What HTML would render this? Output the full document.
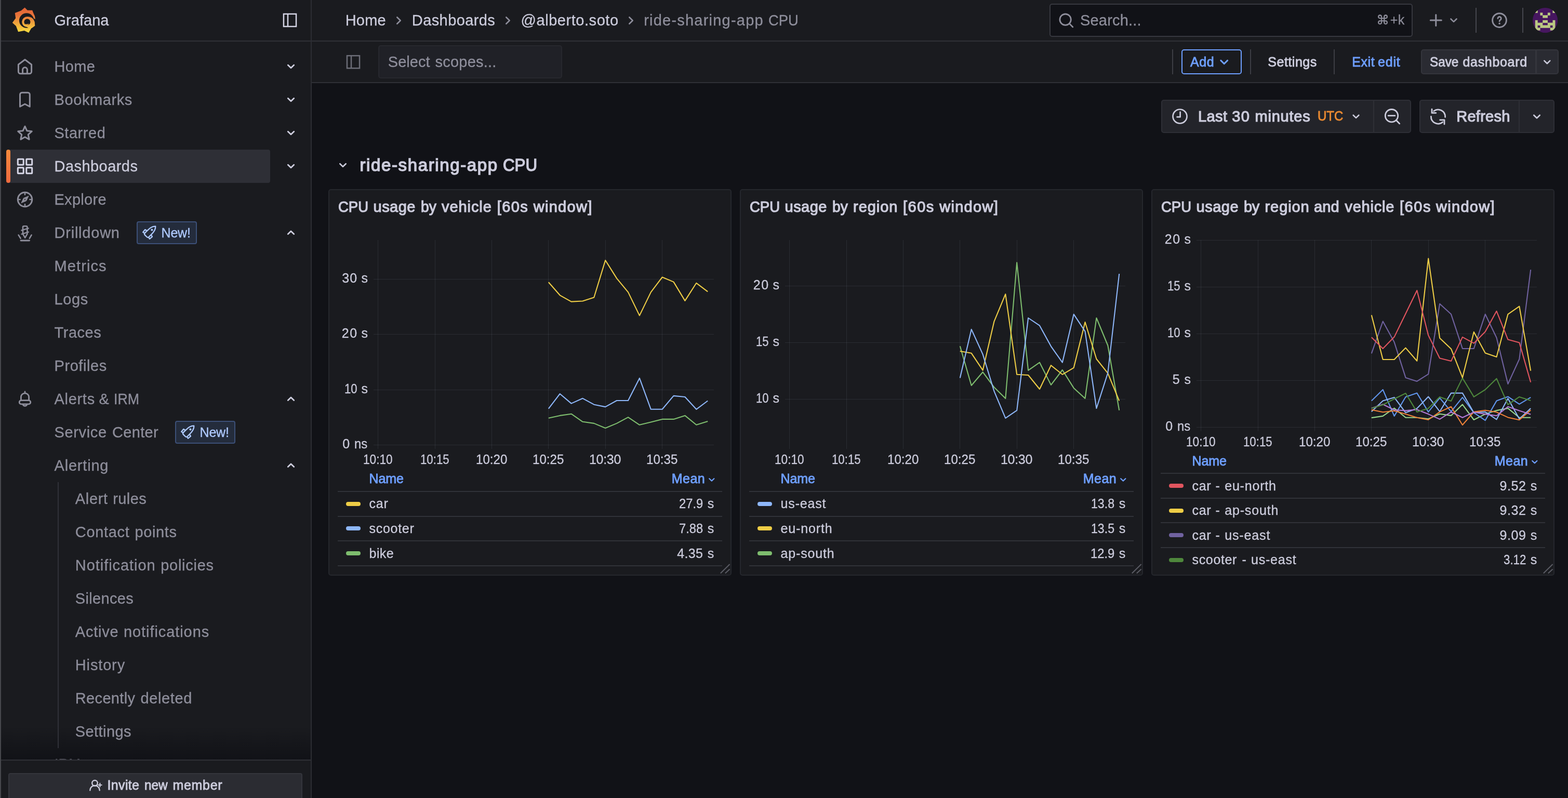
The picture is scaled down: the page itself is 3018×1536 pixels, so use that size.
<!DOCTYPE html>
<html lang="en">
<head>
<meta charset="utf-8">
<title>ride-sharing-app CPU - Dashboards - Grafana</title>
<style>
*{box-sizing:border-box;margin:0;padding:0}
html,body{width:3018px;height:1536px;overflow:hidden;background:#111217}
body{font-family:"Liberation Sans",sans-serif;color:#ccccdc;-webkit-font-smoothing:antialiased}
#app{will-change:transform;position:relative;width:3018px;height:1536px;overflow:hidden;background:#111217}
.t{position:absolute;white-space:nowrap;display:block}
.abs{position:absolute}
svg{position:absolute;overflow:visible}
ul{list-style:none}
a{color:inherit;text-decoration:none}
button{font:inherit;color:inherit;background:none;border:0}
#sidebar{position:absolute;left:0;top:0;width:600px;height:1536px;background:#1a1b1f;border-right:2px solid #2c2d33;border-left:2px solid #46474c;overflow:hidden}
#sidebar-head{position:absolute;left:0;top:0;width:598px;height:80px;border-bottom:2px solid #2f3036}
#topbar{position:absolute;left:600px;top:0;width:2418px;height:80px;background:#1a1b1f;border-bottom:2px solid #2f3036}
#toolbar{position:absolute;left:600px;top:80px;width:2418px;height:80px;background:#1a1b1f;border-bottom:2px solid #2f3036}
#main{position:absolute;left:600px;top:160px;width:2418px;height:1376px;background:#111217}
.navactive{position:absolute;left:12px;top:288px;width:508px;height:64px;background:#2e2f36;border-radius:4px}
.navactive:before{content:"";position:absolute;left:0;top:0;width:8px;height:64px;border-radius:4px;background:linear-gradient(180deg,#f58a3c 0%,#ee6a3f 100%)}
.badge{position:absolute;height:44px;border:2px solid #3c5078;background:#242c3c;border-radius:4px}
.vline{position:absolute;background:#303138;width:2px}
.panel{position:absolute;background:#1a1b1f;border:2px solid #25272d;border-radius:5px;overflow:hidden}
.hr{position:absolute;height:2px;background:#303238}
.sw{position:absolute;width:28px;height:8px;border-radius:4px}
.btn{position:absolute;border-radius:4px}
.tw{display:block;font-weight:400;font-size:16px;line-height:0}

</style>
</head>
<body>
<div id="app">
<nav id="sidebar" aria-label="Navigation">
<div class="abs" style="left:-2px;top:0;width:600px;height:1536px">
<div id="sidebar-head" style="left:2px"></div>
<svg style="left:0;top:0" width="80" height="80" viewBox="0 0 80 80"><defs><linearGradient id="glg" gradientUnits="userSpaceOnUse" x1="0" y1="15" x2="0" y2="63"><stop offset="0" stop-color="#e26337"/><stop offset="0.3" stop-color="#e8733a"/><stop offset="1" stop-color="#f7de3f"/></linearGradient></defs><polygon points="47.7,14.6 52.8,19.7 62.2,19.8 64.4,25.5 67,31 67.9,37.7 66.6,43 67.4,49.5 60.2,54.4 55.2,63 46.8,58.9 35.1,61.2 30.8,50 23.8,43.8 30.2,35 28.7,24.9 40.6,20.6" fill="url(#glg)"/><circle cx="51.2" cy="39.5" r="14.3" fill="#1a1b1f"/><path d="M64.6 35.2 L70 37.9 L70 42.4 L65.2 41.2 Z" fill="#1a1b1f"/><path d="M52.3 32.1 A10.1 10.1 0 1 0 52.3 52.3 L57 55.5 L62 53.5 L67 49.6 L66.4 42.6 C66 39 63 32.1 52.3 32.1 Z" fill="url(#glg)"/><circle cx="52.4" cy="42.2" r="6.05" fill="#1a1b1f"/><path d="M49.6 46.9 Q52 48.3 54.4 46.4" fill="none" stroke="#f2a63c" stroke-width="1.5" stroke-linecap="round"/></svg>
<span class="t" style="left:104.5px;top:21.1px;font-size:29px;line-height:36px;color:#ccccdc;letter-spacing:0.03px;-webkit-text-stroke:0.3px currentColor;">Grafana</span>
<svg style="left:0;top:0" width="1" height="1"><rect x="545.95" y="26.90" width="24.10" height="24.10" fill="none" stroke="#d4d4e4" stroke-width="2.5"/><path d="M554.00 26.90 V51.00" fill="none" stroke="#d4d4e4" stroke-width="2.5"/></svg>
<div class="abs" style="left:2px;top:1398px;width:596px;height:64px;background:linear-gradient(180deg,rgba(17,18,23,0) 0%,rgba(17,18,23,1) 100%)"></div>
<div class="navactive"></div>
<div class="vline" style="left:111px;top:928px;height:512px"></div>
<ul>
<li>
<svg style="left:32px;top:112px" width="32" height="32" viewBox="0 0 32 32" ><path d="M3.4 12.3 L16 2.7 L28.6 12.3 V25.8 a4 4 0 0 1 -4 4 H7.4 a4 4 0 0 1 -4 -4 Z" fill="none" stroke="#8e8e9b" stroke-width="3" stroke-linecap="round" stroke-linejoin="round" /><path d="M11.6 29.6 V22.1 a4.4 4.4 0 0 1 8.8 0 V29.6" fill="none" stroke="#8e8e9b" stroke-width="3" stroke-linecap="round" stroke-linejoin="round" /></svg>
<a class="t" style="left:104.5px;top:110.1px;font-size:29px;line-height:36px;color:#8e8e9b;letter-spacing:0.32px;-webkit-text-stroke:0.3px currentColor;">Home</a>
<svg style="left:0;top:0" width="1" height="1"><path d="M554.30 125.20 L560.00 130.80 L565.70 125.20" fill="none" stroke="#cfcfdf" stroke-width="2.8" stroke-linecap="round" stroke-linejoin="round"/></svg>
</li>
<li>
<svg style="left:32px;top:176px" width="32" height="32" viewBox="0 0 32 32" ><path d="M6.5 29.3 V6 a3.7 3.7 0 0 1 3.7 -3.7 H21.6 a3.7 3.7 0 0 1 3.7 3.7 V29.3 L15.9 24.2 Z" fill="none" stroke="#8e8e9b" stroke-width="3" stroke-linecap="round" stroke-linejoin="round" /></svg>
<a class="t" style="left:104.5px;top:174.1px;font-size:29px;line-height:36px;color:#8e8e9b;letter-spacing:0.6px;-webkit-text-stroke:0.3px currentColor;">Bookmarks</a>
<svg style="left:0;top:0" width="1" height="1"><path d="M554.30 189.20 L560.00 194.80 L565.70 189.20" fill="none" stroke="#cfcfdf" stroke-width="2.8" stroke-linecap="round" stroke-linejoin="round"/></svg>
</li>
<li>
<svg style="left:32px;top:240px" width="32" height="32" viewBox="0 0 32 32" ><polygon points="16.00,3.20 19.88,11.76 29.22,12.80 22.28,19.14 24.17,28.35 16.00,23.70 7.83,28.35 9.72,19.14 2.78,12.80 12.12,11.76" fill="none" stroke="#8e8e9b" stroke-width="3" stroke-linecap="round" stroke-linejoin="round" /></svg>
<a class="t" style="left:104.5px;top:238.1px;font-size:29px;line-height:36px;color:#8e8e9b;letter-spacing:0.53px;-webkit-text-stroke:0.3px currentColor;">Starred</a>
<svg style="left:0;top:0" width="1" height="1"><path d="M554.30 253.20 L560.00 258.80 L565.70 253.20" fill="none" stroke="#cfcfdf" stroke-width="2.8" stroke-linecap="round" stroke-linejoin="round"/></svg>
</li>
<li>
<svg style="left:32px;top:304px" width="32" height="32" viewBox="0 0 32 32" ><rect x="2.3" y="2.3" width="10.9" height="10.9" rx="0.8" fill="none" stroke="#d6d6e6" stroke-width="3" stroke-linecap="round" stroke-linejoin="round" /><rect x="2.3" y="18.8" width="10.9" height="10.9" rx="0.8" fill="none" stroke="#d6d6e6" stroke-width="3" stroke-linecap="round" stroke-linejoin="round" /><rect x="18.8" y="2.3" width="10.9" height="10.9" rx="0.8" fill="none" stroke="#d6d6e6" stroke-width="3" stroke-linecap="round" stroke-linejoin="round" /><rect x="18.8" y="18.8" width="10.9" height="10.9" rx="0.8" fill="none" stroke="#d6d6e6" stroke-width="3" stroke-linecap="round" stroke-linejoin="round" /></svg>
<a class="t" style="left:104.5px;top:302.1px;font-size:29px;line-height:36px;color:#ccccdc;letter-spacing:0.45px;-webkit-text-stroke:0.3px currentColor;">Dashboards</a>
<svg style="left:0;top:0" width="1" height="1"><path d="M554.30 317.20 L560.00 322.80 L565.70 317.20" fill="none" stroke="#cfcfdf" stroke-width="2.8" stroke-linecap="round" stroke-linejoin="round"/></svg>
</li>
<li>
<svg style="left:32px;top:368px" width="32" height="32" viewBox="0 0 32 32" ><circle cx="16" cy="16" r="13.7" fill="none" stroke="#8e8e9b" stroke-width="3" stroke-linecap="round" stroke-linejoin="round" /><path d="M16 4.5V6.6 M16 25.4V27.5 M4.5 16H6.6 M25.4 16H27.5" fill="none" stroke="#8e8e9b" stroke-width="2.6" stroke-linecap="round" stroke-linejoin="round" /><path d="M23.2 9.2 L18.6 18.8 L8.8 22.8 L13.4 13.2 Z M16 14.6 a1.4 1.4 0 1 0 0.01 0 Z" fill="#8e8e9b" fill-rule="evenodd" stroke="#8e8e9b" stroke-width="0.8" stroke-linejoin="round"/></svg>
<a class="t" style="left:104.5px;top:366.1px;font-size:29px;line-height:36px;color:#8e8e9b;letter-spacing:0.28px;-webkit-text-stroke:0.3px currentColor;">Explore</a>
</li>
<li>
<svg style="left:32px;top:432px" width="32" height="32" viewBox="0 0 32 32" ><path d="M12 5.2 a2 2 0 0 1 2 -2 h4.4 a2 2 0 0 1 2 2 V18.4 L16.2 25.6 L12 18.4 Z" fill="none" stroke="#8e8e9b" stroke-width="2.6" stroke-linecap="round" stroke-linejoin="round" /><path d="M9.4 11.4 L22.8 7.4 M9.6 18.6 L22.8 14.6" fill="none" stroke="#8e8e9b" stroke-width="2.4" stroke-linecap="round" stroke-linejoin="round" /><path d="M3.6 20.4 L7.6 26.8 M28.6 20.4 L24.8 26.8" fill="none" stroke="#8e8e9b" stroke-width="2.6" stroke-linecap="round" stroke-linejoin="round" /><path d="M8 31 H24.6" fill="none" stroke="#8e8e9b" stroke-width="2.8" stroke-linecap="round" stroke-linejoin="round" /></svg>
<a class="t" style="left:104.5px;top:430.1px;font-size:29px;line-height:36px;color:#8e8e9b;letter-spacing:0.78px;-webkit-text-stroke:0.3px currentColor;">Drilldown</a>
<span class="badge" style="left:263px;top:426px;width:116px"></span>
<svg style="left:267px;top:428px" width="40" height="40" viewBox="0 0 40 40" ><g transform="translate(20 20) rotate(45)"><path d="M0 -17.4 C4.6 -13.4 5.7 -8 5.4 0 V6 Q5.4 8.8 2.6 8.8 H-2.6 Q-5.4 8.8 -5.4 6 V0 C-5.7 -8 -4.6 -13.4 0 -17.4 Z" fill="none" stroke="#afcaff" stroke-width="2.3" stroke-linecap="round" stroke-linejoin="round" /><path d="M-5.6 0.2 L-9.7 1.2 L-9 7.7 L-5.6 6.8 M5.6 0.2 L9.7 1.2 L9 7.7 L5.6 6.8" fill="none" stroke="#afcaff" stroke-width="2.3" stroke-linecap="round" stroke-linejoin="round" /><rect x="-1.8" y="-9.5" width="3.6" height="3.6" fill="#afcaff"/></g></svg>
<span class="t" style="left:310.5px;top:432.6px;font-size:25px;line-height:31px;color:#afcaff;letter-spacing:-0.17px;-webkit-text-stroke:0.3px currentColor;">New!</span>
<svg style="left:0;top:0" width="1" height="1"><path d="M554.30 450.60 L560.00 445.00 L565.70 450.60" fill="none" stroke="#cfcfdf" stroke-width="2.8" stroke-linecap="round" stroke-linejoin="round"/></svg>
</li>
<li>
<a class="t" style="left:104.5px;top:494.1px;font-size:29px;line-height:36px;color:#8e8e9b;letter-spacing:1.1px;-webkit-text-stroke:0.3px currentColor;">Metrics</a>
</li>
<li>
<a class="t" style="left:104.5px;top:558.1px;font-size:29px;line-height:36px;color:#8e8e9b;letter-spacing:0.59px;-webkit-text-stroke:0.3px currentColor;">Logs</a>
</li>
<li>
<a class="t" style="left:104.5px;top:622.1px;font-size:29px;line-height:36px;color:#8e8e9b;letter-spacing:0.54px;-webkit-text-stroke:0.3px currentColor;">Traces</a>
</li>
<li>
<a class="t" style="left:104.5px;top:686.1px;font-size:29px;line-height:36px;color:#8e8e9b;letter-spacing:0.57px;-webkit-text-stroke:0.3px currentColor;">Profiles</a>
</li>
<li>
<svg style="left:32px;top:752px" width="32" height="32" viewBox="0 0 32 32" ><path d="M16 1.8 V4.2" fill="none" stroke="#8e8e9b" stroke-width="2.8" stroke-linecap="round" stroke-linejoin="round" /><path d="M8.4 18.6 V12.4 a7.6 7.6 0 0 1 15.2 0 V18.6" fill="none" stroke="#8e8e9b" stroke-width="2.8" stroke-linecap="round" stroke-linejoin="round" /><rect x="5.2" y="18.6" width="21.6" height="7.3" rx="3.6" fill="none" stroke="#8e8e9b" stroke-width="2.8" stroke-linecap="round" stroke-linejoin="round" /><path d="M12.2 26.6 a4 4 0 0 0 7.6 0" fill="none" stroke="#8e8e9b" stroke-width="2.8" stroke-linecap="round" stroke-linejoin="round" /></svg>
<a class="tw"><span class="t" style="left:104.5px;top:750.1px;font-size:29px;line-height:36px;color:#8e8e9b;letter-spacing:0.7px;-webkit-text-stroke:0.3px currentColor;">Alerts</span> <span class="t" style="left:190.4px;top:750.1px;font-size:29px;line-height:36px;color:#8e8e9b;-webkit-text-stroke:0.3px currentColor;">&amp;</span> <span class="t" style="left:218.9px;top:750.1px;font-size:29px;line-height:36px;color:#8e8e9b;transform:scaleX(0.9264);transform-origin:0 0;-webkit-text-stroke:0.3px currentColor;">IRM</span></a>
<svg style="left:0;top:0" width="1" height="1"><path d="M554.30 770.60 L560.00 765.00 L565.70 770.60" fill="none" stroke="#cfcfdf" stroke-width="2.8" stroke-linecap="round" stroke-linejoin="round"/></svg>
</li>
<li>
<a class="tw"><span class="t" style="left:104.5px;top:814.1px;font-size:29px;line-height:36px;color:#8e8e9b;letter-spacing:0.66px;-webkit-text-stroke:0.3px currentColor;">Service</span> <span class="t" style="left:215.9px;top:814.1px;font-size:29px;line-height:36px;color:#8e8e9b;letter-spacing:0.36px;-webkit-text-stroke:0.3px currentColor;">Center</span></a>
<span class="badge" style="left:337px;top:810px;width:116px"></span>
<svg style="left:341px;top:812px" width="40" height="40" viewBox="0 0 40 40" ><g transform="translate(20 20) rotate(45)"><path d="M0 -17.4 C4.6 -13.4 5.7 -8 5.4 0 V6 Q5.4 8.8 2.6 8.8 H-2.6 Q-5.4 8.8 -5.4 6 V0 C-5.7 -8 -4.6 -13.4 0 -17.4 Z" fill="none" stroke="#afcaff" stroke-width="2.3" stroke-linecap="round" stroke-linejoin="round" /><path d="M-5.6 0.2 L-9.7 1.2 L-9 7.7 L-5.6 6.8 M5.6 0.2 L9.7 1.2 L9 7.7 L5.6 6.8" fill="none" stroke="#afcaff" stroke-width="2.3" stroke-linecap="round" stroke-linejoin="round" /><rect x="-1.8" y="-9.5" width="3.6" height="3.6" fill="#afcaff"/></g></svg>
<span class="t" style="left:384.5px;top:816.6px;font-size:25px;line-height:31px;color:#afcaff;letter-spacing:-0.17px;-webkit-text-stroke:0.3px currentColor;">New!</span>
</li>
<li>
<a class="t" style="left:104.5px;top:878.1px;font-size:29px;line-height:36px;color:#8e8e9b;letter-spacing:0.81px;-webkit-text-stroke:0.3px currentColor;">Alerting</a>
<svg style="left:0;top:0" width="1" height="1"><path d="M554.30 898.60 L560.00 893.00 L565.70 898.60" fill="none" stroke="#cfcfdf" stroke-width="2.8" stroke-linecap="round" stroke-linejoin="round"/></svg>
</li>
<li>
<a class="tw"><span class="t" style="left:144.8px;top:942.1px;font-size:29px;line-height:36px;color:#8e8e9b;letter-spacing:0.65px;-webkit-text-stroke:0.3px currentColor;">Alert</span> <span class="t" style="left:217.2px;top:942.1px;font-size:29px;line-height:36px;color:#8e8e9b;letter-spacing:0.42px;-webkit-text-stroke:0.3px currentColor;">rules</span></a>
</li>
<li>
<a class="tw"><span class="t" style="left:144.8px;top:1006.1px;font-size:29px;line-height:36px;color:#8e8e9b;letter-spacing:0.68px;-webkit-text-stroke:0.3px currentColor;">Contact</span> <span class="t" style="left:259.5px;top:1006.1px;font-size:29px;line-height:36px;color:#8e8e9b;letter-spacing:0.61px;-webkit-text-stroke:0.3px currentColor;">points</span></a>
</li>
<li>
<a class="tw"><span class="t" style="left:144.8px;top:1070.1px;font-size:29px;line-height:36px;color:#8e8e9b;letter-spacing:0.94px;-webkit-text-stroke:0.3px currentColor;">Notification</span> <span class="t" style="left:309.2px;top:1070.1px;font-size:29px;line-height:36px;color:#8e8e9b;letter-spacing:0.73px;-webkit-text-stroke:0.3px currentColor;">policies</span></a>
</li>
<li>
<a class="t" style="left:144.8px;top:1134.1px;font-size:29px;line-height:36px;color:#8e8e9b;letter-spacing:0.34px;-webkit-text-stroke:0.3px currentColor;">Silences</a>
</li>
<li>
<a class="tw"><span class="t" style="left:144.8px;top:1198.1px;font-size:29px;line-height:36px;color:#8e8e9b;letter-spacing:0.75px;-webkit-text-stroke:0.3px currentColor;">Active</span> <span class="t" style="left:238.0px;top:1198.1px;font-size:29px;line-height:36px;color:#8e8e9b;letter-spacing:0.92px;-webkit-text-stroke:0.3px currentColor;">notifications</span></a>
</li>
<li>
<a class="t" style="left:144.8px;top:1262.1px;font-size:29px;line-height:36px;color:#8e8e9b;letter-spacing:0.85px;-webkit-text-stroke:0.3px currentColor;">History</a>
</li>
<li>
<a class="tw"><span class="t" style="left:144.8px;top:1326.1px;font-size:29px;line-height:36px;color:#8e8e9b;letter-spacing:0.34px;-webkit-text-stroke:0.3px currentColor;">Recently</span> <span class="t" style="left:270.6px;top:1326.1px;font-size:29px;line-height:36px;color:#8e8e9b;letter-spacing:0.61px;-webkit-text-stroke:0.3px currentColor;">deleted</span></a>
</li>
<li>
<a class="t" style="left:144.8px;top:1390.1px;font-size:29px;line-height:36px;color:#8e8e9b;letter-spacing:0.41px;-webkit-text-stroke:0.3px currentColor;">Settings</a>
</li>
<li>
<a class="t" style="left:104.5px;top:1453.3px;font-size:29px;line-height:36px;color:#5e5e69;transform:scaleX(0.9396);transform-origin:0 0;-webkit-text-stroke:0.3px currentColor;">IRM</a>
<svg style="left:0;top:0" width="1" height="1"><path d="M554.30 1473.80 L560.00 1468.20 L565.70 1473.80" fill="none" stroke="#cfcfdf" stroke-width="2.8" stroke-linecap="round" stroke-linejoin="round"/></svg>
</li>
</ul>
<div class="abs" style="left:2px;top:1462px;width:596px;height:74px;background:#1a1b1f;border-top:2px solid #2f3036"></div>
<button class="btn" style="left:16px;top:1488px;width:566px;height:64px;background:#2b2c32;border:2px solid #34353c"></button>
<svg style="left:0;top:0" width="1" height="1"><circle cx="182.5" cy="1507.3" r="5.3" fill="none" stroke="#ccccdc" stroke-width="2.4" stroke-linecap="round" stroke-linejoin="round" /><path d="M173.29999999999998 1521.1999999999998 a9.2 9.2 0 0 1 18.4 0" fill="none" stroke="#ccccdc" stroke-width="2.4" stroke-linecap="round" stroke-linejoin="round" /><path d="M189.2 1511.0 H195.6 M192.4 1507.8 V1514.1999999999998" fill="none" stroke="#ccccdc" stroke-width="2.2" stroke-linecap="round" stroke-linejoin="round" /></svg>
<span class="tw"><span class="t" style="left:206.5px;top:1496.3px;font-size:25px;line-height:31px;color:#ccccdc;letter-spacing:0.35px;-webkit-text-stroke:0.85px currentColor;">Invite</span> <span class="t" style="left:278.0px;top:1496.3px;font-size:25px;line-height:31px;color:#ccccdc;transform:scaleX(0.9744);transform-origin:0 0;-webkit-text-stroke:0.85px currentColor;">new</span> <span class="t" style="left:332.6px;top:1496.3px;font-size:25px;line-height:31px;color:#ccccdc;letter-spacing:0.65px;-webkit-text-stroke:0.85px currentColor;">member</span></span>
</div>
</nav>
<header id="topbar">
<div class="abs" style="left:-600px;top:0;width:3018px;height:80px">
<nav aria-label="Breadcrumbs">
<a class="t" style="left:664.7px;top:21.1px;font-size:29px;line-height:36px;color:#ccccdc;letter-spacing:0.19px;-webkit-text-stroke:0.3px currentColor;">Home</a>
<svg style="left:0;top:0" width="1" height="1"><path d="M764.30 33.20 L770.70 39.50 L764.30 45.80" fill="none" stroke="#8e8e9b" stroke-width="2.6" stroke-linecap="round" stroke-linejoin="round"/></svg>
<a class="t" style="left:792.8px;top:21.1px;font-size:29px;line-height:36px;color:#ccccdc;letter-spacing:0.41px;-webkit-text-stroke:0.3px currentColor;">Dashboards</a>
<svg style="left:0;top:0" width="1" height="1"><path d="M974.30 33.20 L980.70 39.50 L974.30 45.80" fill="none" stroke="#8e8e9b" stroke-width="2.6" stroke-linecap="round" stroke-linejoin="round"/></svg>
<a class="t" style="left:1002.5px;top:21.1px;font-size:29px;line-height:36px;color:#ccccdc;letter-spacing:0.55px;-webkit-text-stroke:0.3px currentColor;">@alberto.soto</a>
<svg style="left:0;top:0" width="1" height="1"><path d="M1211.30 33.20 L1217.70 39.50 L1211.30 45.80" fill="none" stroke="#8e8e9b" stroke-width="2.6" stroke-linecap="round" stroke-linejoin="round"/></svg>
<span class="tw"><span class="t" style="left:1239.2px;top:21.1px;font-size:29px;line-height:36px;color:#8e8e9b;letter-spacing:1.22px;-webkit-text-stroke:0.3px currentColor;">ride-sharing-app</span> <span class="t" style="left:1478.5px;top:21.1px;font-size:29px;line-height:36px;color:#8e8e9b;transform:scaleX(0.9430);transform-origin:0 0;-webkit-text-stroke:0.3px currentColor;">CPU</span></span>
</nav>
<div class="abs" style="left:2020px;top:7px;width:699px;height:64px;background:#111217;border:2px solid #37383f;border-radius:5px"></div>
<svg style="left:0;top:0" width="1" height="1"><circle cx="2050.60" cy="37.70" r="10.7" fill="none" stroke="#8e8e9b" stroke-width="2.8" stroke-linecap="round" stroke-linejoin="round" /><path d="M2058.52 45.62 L2064.80 51.90" fill="none" stroke="#8e8e9b" stroke-width="2.8" stroke-linecap="round" stroke-linejoin="round" /></svg>
<span class="t" style="left:2079.0px;top:21.1px;font-size:29px;line-height:36px;color:#8e8e9b;letter-spacing:0.18px;-webkit-text-stroke:0.3px currentColor;">Search...</span>
<span class="t" style="left:2649.3px;top:23.5px;font-size:24.5px;line-height:30px;color:#8e8e9b;font-family:'DejaVu Sans',sans-serif;-webkit-text-stroke:0.5px currentColor">⌘</span>
<span class="t" style="left:2675.8px;top:22.8px;font-size:25px;line-height:31px;color:#8e8e9b;-webkit-text-stroke:0.3px currentColor;">+</span>
<span class="t" style="left:2690.8px;top:22.8px;font-size:25px;line-height:31px;color:#8e8e9b;-webkit-text-stroke:0.3px currentColor;">k</span>
<svg style="left:0;top:0" width="1" height="1"><path d="M2753.3 39 H2774.3 M2763.8 28.5 V49.5" fill="none" stroke="#8e8e9b" stroke-width="3" stroke-linecap="round" stroke-linejoin="round" /></svg>
<svg style="left:0;top:0" width="1" height="1"><path d="M2792.50 36.50 L2798.00 41.90 L2803.50 36.50" fill="none" stroke="#8e8e9b" stroke-width="2.6" stroke-linecap="round" stroke-linejoin="round"/></svg>
<div class="abs" style="left:2840px;top:15px;width:2px;height:48px;background:#45464d"></div>
<svg style="left:0;top:0" width="1" height="1"><circle cx="2886" cy="39.1" r="13.4" fill="none" stroke="#8e8e9b" stroke-width="2.9" stroke-linecap="round" stroke-linejoin="round" /><path d="M2882.9 35.5 a3.2 3.2 0 1 1 4.9 2.7 c-1.2 0.8 -1.7 1.4 -1.7 2.7" fill="none" stroke="#8e8e9b" stroke-width="2.8" stroke-linecap="round" stroke-linejoin="round" /><circle cx="2886.1" cy="45.2" r="1.75" fill="#8e8e9b"/></svg>
<div class="abs" style="left:2930px;top:15px;width:2px;height:48px;background:#45464d"></div>
<svg style="left:2950px;top:14.9px" width="48.2" height="48.2" viewBox="0 0 48.2 48.2" ><defs><clipPath id="avc"><circle cx="24.1" cy="24.1" r="24.1"/></clipPath></defs><g clip-path="url(#avc)"><rect width="48.2" height="48.2" fill="#46165f"/><rect x="4.77" y="4.57" width="4.92" height="5.32" fill="#bac882"/><rect x="38.51" y="4.57" width="4.92" height="5.32" fill="#bac882"/><rect x="14.41" y="9.39" width="4.92" height="5.32" fill="#bac882"/><rect x="28.87" y="9.39" width="4.92" height="5.32" fill="#bac882"/><rect x="19.23" y="14.21" width="9.74" height="5.32" fill="#bac882"/><rect x="4.77" y="23.85" width="4.92" height="5.32" fill="#bac882"/><rect x="19.23" y="23.85" width="9.74" height="5.32" fill="#bac882"/><rect x="38.51" y="23.85" width="4.92" height="5.32" fill="#bac882"/><rect x="4.77" y="28.67" width="14.56" height="5.32" fill="#bac882"/><rect x="28.87" y="28.67" width="14.56" height="5.32" fill="#bac882"/><rect x="4.77" y="33.49" width="4.92" height="5.32" fill="#bac882"/><rect x="14.41" y="33.49" width="19.38" height="5.32" fill="#bac882"/><rect x="38.51" y="33.49" width="4.92" height="5.32" fill="#bac882"/><rect x="4.77" y="38.31" width="9.74" height="5.32" fill="#bac882"/><rect x="33.69" y="38.31" width="9.74" height="5.32" fill="#bac882"/></g></svg>
</div>
</header>
<div id="toolbar" role="toolbar">
<div class="abs" style="left:-600px;top:-80px;width:3018px;height:160px">
<svg style="left:0;top:0" width="1" height="1"><rect x="667.95" y="107.20" width="24.10" height="24.10" fill="none" stroke="#6c6d77" stroke-width="2.5"/><path d="M676.00 107.20 V131.30" fill="none" stroke="#6c6d77" stroke-width="2.5"/></svg>
<div class="abs" style="left:728px;top:87px;width:354px;height:64px;background:#202127;border:2px solid #27282e;border-radius:5px"></div>
<span class="tw"><span class="t" style="left:746.8px;top:101.1px;font-size:29px;line-height:36px;color:#8e8e9b;letter-spacing:0.04px;-webkit-text-stroke:0.3px currentColor;">Select</span> <span class="t" style="left:837.6px;top:101.1px;font-size:29px;line-height:36px;color:#8e8e9b;letter-spacing:0.2px;-webkit-text-stroke:0.3px currentColor;">scopes...</span></span>
<div class="abs" style="left:2256px;top:95px;width:2px;height:48px;background:#3c3d44"></div>
<div class="abs" style="left:2406px;top:95px;width:2px;height:48px;background:#3c3d44"></div>
<div class="abs" style="left:2567px;top:95px;width:2px;height:48px;background:#3c3d44"></div>
<button class="btn" style="left:2274px;top:95px;width:116px;height:48px;border:2px solid #6e9fff;border-radius:5px"></button>
<span class="t" style="left:2291.0px;top:103.5px;font-size:25px;line-height:31px;color:#6e9fff;letter-spacing:0.6px;-webkit-text-stroke:0.85px currentColor;">Add</span>
<svg style="left:0;top:0" width="1" height="1"><path d="M2349.80 116.40 L2356.20 122.80 L2362.60 116.40" fill="none" stroke="#6e9fff" stroke-width="3" stroke-linecap="round" stroke-linejoin="round"/></svg>
<span class="t" style="left:2440.3px;top:103.5px;font-size:25px;line-height:31px;color:#ccccdc;letter-spacing:0.52px;-webkit-text-stroke:0.85px currentColor;">Settings</span>
<span class="tw"><span class="t" style="left:2602.2px;top:103.5px;font-size:25px;line-height:31px;color:#6e9fff;letter-spacing:0.62px;-webkit-text-stroke:0.85px currentColor;">Exit</span> <span class="t" style="left:2651.9px;top:103.5px;font-size:25px;line-height:31px;color:#6e9fff;letter-spacing:0.85px;-webkit-text-stroke:0.85px currentColor;">edit</span></span>
<button class="btn" style="left:2735px;top:95px;width:222px;height:48px;background:#2a2b32;border:2px solid #34353c;border-radius:5px 0 0 5px"></button>
<button class="btn" style="left:2956px;top:95px;width:44px;height:48px;background:#2a2b32;border:2px solid #34353c;border-radius:0 5px 5px 0"></button>
<span class="tw"><span class="t" style="left:2751.9px;top:103.5px;font-size:25px;line-height:31px;color:#ccccdc;transform:scaleX(0.9719);transform-origin:0 0;-webkit-text-stroke:0.85px currentColor;">Save</span> <span class="t" style="left:2815.5px;top:103.5px;font-size:25px;line-height:31px;color:#ccccdc;letter-spacing:0.68px;-webkit-text-stroke:0.85px currentColor;">dashboard</span></span>
<svg style="left:0;top:0" width="1" height="1"><path d="M2972.30 116.90 L2977.80 122.30 L2983.30 116.90" fill="none" stroke="#ccccdc" stroke-width="2.6" stroke-linecap="round" stroke-linejoin="round"/></svg>
</div>
</div>
<main id="main">
<div class="abs" style="left:-600px;top:-160px;width:3018px;height:1536px">
<button class="btn" style="left:2235px;top:192px;width:410px;height:64px;background:#23242a;border:2px solid #2e2f36;border-radius:5px 0 0 5px"></button>
<button class="btn" style="left:2643px;top:192px;width:73px;height:64px;background:#23242a;border:2px solid #2e2f36;border-radius:0 5px 5px 0"></button>
<svg style="left:0;top:0" width="1" height="1"><circle cx="2271" cy="224" r="13.5" fill="none" stroke="#ccccdc" stroke-width="2.7" stroke-linecap="round" stroke-linejoin="round" /><path d="M2271.6 215.6 V225.2 H2265.6" fill="none" stroke="#ccccdc" stroke-width="2.7" stroke-linecap="round" stroke-linejoin="round" /></svg>
<span class="tw"><span class="t" style="left:2306.1px;top:205.9px;font-size:29px;line-height:36px;color:#ccccdc;letter-spacing:0.36px;-webkit-text-stroke:1.20px currentColor;">Last</span> <span class="t" style="left:2371.3px;top:205.9px;font-size:29px;line-height:36px;color:#ccccdc;letter-spacing:1.21px;-webkit-text-stroke:1.20px currentColor;">30</span> <span class="t" style="left:2415.6px;top:205.9px;font-size:29px;line-height:36px;color:#ccccdc;letter-spacing:0.75px;-webkit-text-stroke:1.20px currentColor;">minutes</span></span>
<span class="t" style="left:2535.6px;top:208.1px;font-size:25px;line-height:31px;color:#ea8a32;transform:scaleX(0.9577);transform-origin:0 0;-webkit-text-stroke:0.85px currentColor;">UTC</span>
<svg style="left:0;top:0" width="1" height="1"><path d="M2604.70 221.70 L2610.00 226.90 L2615.30 221.70" fill="none" stroke="#ccccdc" stroke-width="2.6" stroke-linecap="round" stroke-linejoin="round"/></svg>
<svg style="left:0;top:0" width="1" height="1"><circle cx="2678.5" cy="222.7" r="12.2" fill="none" stroke="#ccccdc" stroke-width="2.8" stroke-linecap="round" stroke-linejoin="round" /><path d="M2672.1 222.7 H2684.9" fill="none" stroke="#ccccdc" stroke-width="2.8" stroke-linecap="round" stroke-linejoin="round" /><path d="M2687.4 231.6 L2693.7 237.89999999999998" fill="none" stroke="#ccccdc" stroke-width="2.8" stroke-linecap="round" stroke-linejoin="round" /></svg>
<button class="btn" style="left:2732px;top:192px;width:193px;height:64px;background:#23242a;border:2px solid #2e2f36;border-radius:5px 0 0 5px"></button>
<button class="btn" style="left:2923px;top:192px;width:69px;height:64px;background:#23242a;border:2px solid #2e2f36;border-radius:0 5px 5px 0"></button>
<svg style="left:0;top:0" width="1" height="1"><path d="M2759.63 213.88 A13.6 13.6 0 0 1 2781.58 225.31" fill="none" stroke="#ccccdc" stroke-width="2.8" stroke-linecap="round" stroke-linejoin="round" /><path d="M2754.41 224.13 A13.6 13.6 0 0 0 2776.74 235.02" fill="none" stroke="#ccccdc" stroke-width="2.8" stroke-linecap="round" stroke-linejoin="round" /><path d="M2756 210.2 V217.4 H2763.8" fill="none" stroke="#ccccdc" stroke-width="2.8" stroke-linecap="round" stroke-linejoin="round" /><path d="M2771.6 230.9 H2780 V239.0" fill="none" stroke="#ccccdc" stroke-width="2.8" stroke-linecap="round" stroke-linejoin="round" /></svg>
<span class="t" style="left:2803.2px;top:205.9px;font-size:29px;line-height:36px;color:#ccccdc;letter-spacing:0.28px;-webkit-text-stroke:1.20px currentColor;">Refresh</span>
<svg style="left:0;top:0" width="1" height="1"><path d="M2952.30 221.70 L2958.00 227.30 L2963.70 221.70" fill="none" stroke="#ccccdc" stroke-width="2.7" stroke-linecap="round" stroke-linejoin="round"/></svg>
<svg style="left:0;top:0" width="1" height="1"><path d="M654.30 315.20 L660.00 320.80 L665.70 315.20" fill="none" stroke="#ccccdc" stroke-width="2.6" stroke-linecap="round" stroke-linejoin="round"/></svg>
<h2 class="tw"><span class="t" style="left:692.5px;top:296.9px;font-size:33px;line-height:41px;color:#ccccdc;letter-spacing:1.62px;-webkit-text-stroke:1.45px currentColor;">ride-sharing-app</span> <span class="t" style="left:967.9px;top:296.9px;font-size:33px;line-height:41px;color:#ccccdc;transform:scaleX(0.9464);transform-origin:0 0;-webkit-text-stroke:1.45px currentColor;">CPU</span></h2>
<section class="panel" style="left:632px;top:364px;width:776px;height:744px">
<div class="abs" style="left:-634px;top:-366px;width:3018px;height:1536px">
<h3 class="tw"><span class="t" style="left:650.6px;top:380.1px;font-size:29px;line-height:36px;color:#ccccdc;transform:scaleX(0.9479);transform-origin:0 0;-webkit-text-stroke:1.20px currentColor;">CPU</span> <span class="t" style="left:718.6px;top:380.1px;font-size:29px;line-height:36px;color:#ccccdc;letter-spacing:0.44px;-webkit-text-stroke:1.20px currentColor;">usage</span> <span class="t" style="left:809.7px;top:380.1px;font-size:29px;line-height:36px;color:#ccccdc;transform:scaleX(0.9740);transform-origin:0 0;-webkit-text-stroke:1.20px currentColor;">by</span> <span class="t" style="left:850.1px;top:380.1px;font-size:29px;line-height:36px;color:#ccccdc;letter-spacing:0.91px;-webkit-text-stroke:1.20px currentColor;">vehicle</span> <span class="t" style="left:956.7px;top:380.1px;font-size:29px;line-height:36px;color:#ccccdc;letter-spacing:1.4px;-webkit-text-stroke:1.20px currentColor;">[60s</span> <span class="t" style="left:1026.8px;top:380.1px;font-size:29px;line-height:36px;color:#ccccdc;letter-spacing:1.27px;-webkit-text-stroke:1.20px currentColor;">window]</span></h3>
<svg style="left:0;top:0" width="3018" height="1536" viewBox="0 0 3018 1536"><rect x="727" y="462" width="1" height="402" fill="rgba(220,235,255,0.085)"/><rect x="837" y="462" width="1" height="402" fill="rgba(220,235,255,0.085)"/><rect x="946" y="462" width="1" height="402" fill="rgba(220,235,255,0.085)"/><rect x="1055" y="462" width="1" height="402" fill="rgba(220,235,255,0.085)"/><rect x="1165" y="462" width="1" height="402" fill="rgba(220,235,255,0.085)"/><rect x="1274" y="462" width="1" height="402" fill="rgba(220,235,255,0.085)"/><rect x="719" y="537" width="655" height="1" fill="rgba(220,235,255,0.085)"/><rect x="719" y="643" width="655" height="1" fill="rgba(220,235,255,0.085)"/><rect x="719" y="750" width="655" height="1" fill="rgba(220,235,255,0.085)"/><rect x="719" y="856" width="655" height="1" fill="rgba(220,235,255,0.085)"/><polyline points="1055.8,804.8 1077.7,799.9 1099.6,796.7 1121.5,811.8 1143.3,814.9 1165.2,824.0 1187.1,814.9 1209.0,803.1 1230.9,817.8 1252.8,812.6 1274.7,806.9 1296.5,806.9 1318.4,799.9 1340.3,817.8 1362.2,811.1" fill="none" stroke="#7ebd6e" stroke-width="2.1" stroke-linejoin="round" stroke-linecap="butt"/><polyline points="1055.8,543.3 1077.7,568.3 1099.6,580.6 1121.5,579.5 1143.3,572.5 1165.2,501.0 1187.1,535.9 1209.0,562.4 1230.9,607.4 1252.8,562.4 1274.7,533.5 1296.5,542.6 1318.4,578.9 1340.3,544.8 1362.2,561.3" fill="none" stroke="#eecd46" stroke-width="2.1" stroke-linejoin="round" stroke-linecap="butt"/><polyline points="1055.8,786.6 1077.7,758.0 1099.6,776.6 1121.5,766.8 1143.3,778.7 1165.2,783.1 1187.1,771.0 1209.0,771.0 1230.9,727.9 1252.8,787.8 1274.7,787.8 1296.5,761.9 1318.4,764.0 1340.3,787.8 1362.2,771.5" fill="none" stroke="#8eb7fa" stroke-width="2.1" stroke-linejoin="round" stroke-linecap="butt"/></svg>
<span class="tw"><span class="t" style="left:658.2px;top:520.0px;font-size:25px;line-height:31px;color:#ccccdc;letter-spacing:1.15px;-webkit-text-stroke:0.3px currentColor;">30</span> <span class="t" style="left:695.5px;top:520.0px;font-size:25px;line-height:31px;color:#ccccdc;-webkit-text-stroke:0.3px currentColor;">s</span></span>
<span class="tw"><span class="t" style="left:657.8px;top:626.0px;font-size:25px;line-height:31px;color:#ccccdc;letter-spacing:1.55px;-webkit-text-stroke:0.3px currentColor;">20</span> <span class="t" style="left:695.5px;top:626.0px;font-size:25px;line-height:31px;color:#ccccdc;-webkit-text-stroke:0.3px currentColor;">s</span></span>
<span class="tw"><span class="t" style="left:662.6px;top:733.1px;font-size:25px;line-height:31px;color:#ccccdc;transform:scaleX(0.8829);transform-origin:0 0;-webkit-text-stroke:0.3px currentColor;">10</span> <span class="t" style="left:695.5px;top:733.1px;font-size:25px;line-height:31px;color:#ccccdc;-webkit-text-stroke:0.3px currentColor;">s</span></span>
<span class="tw"><span class="t" style="left:659.2px;top:838.9px;font-size:25px;line-height:31px;color:#ccccdc;-webkit-text-stroke:0.3px currentColor;">0</span> <span class="t" style="left:682.1px;top:838.9px;font-size:25px;line-height:31px;color:#ccccdc;transform:scaleX(0.9517);transform-origin:0 0;-webkit-text-stroke:0.3px currentColor;">ns</span></span>
<span class="t" style="left:698.8px;top:869.3px;font-size:25px;line-height:31px;color:#ccccdc;transform:scaleX(0.9054);transform-origin:0 0;-webkit-text-stroke:0.3px currentColor;">10:10</span>
<span class="t" style="left:808.6px;top:869.3px;font-size:25px;line-height:31px;color:#ccccdc;transform:scaleX(0.8894);transform-origin:0 0;-webkit-text-stroke:0.3px currentColor;">10:15</span>
<span class="t" style="left:915.7px;top:869.3px;font-size:25px;line-height:31px;color:#ccccdc;transform:scaleX(0.9645);transform-origin:0 0;-webkit-text-stroke:0.3px currentColor;">10:20</span>
<span class="t" style="left:1025.1px;top:869.3px;font-size:25px;line-height:31px;color:#ccccdc;transform:scaleX(0.9645);transform-origin:0 0;-webkit-text-stroke:0.3px currentColor;">10:25</span>
<span class="t" style="left:1134.0px;top:869.3px;font-size:25px;line-height:31px;color:#ccccdc;letter-spacing:-0.31px;-webkit-text-stroke:0.3px currentColor;">10:30</span>
<span class="t" style="left:1243.9px;top:869.3px;font-size:25px;line-height:31px;color:#ccccdc;transform:scaleX(0.9645);transform-origin:0 0;-webkit-text-stroke:0.3px currentColor;">10:35</span>
<span class="t" style="left:710.6px;top:906.4px;font-size:25px;line-height:31px;color:#6e9fff;letter-spacing:-0.12px;-webkit-text-stroke:0.85px currentColor;">Name</span>
<span class="t" style="left:1292.8px;top:906.4px;font-size:25px;line-height:31px;color:#6e9fff;letter-spacing:0.43px;-webkit-text-stroke:0.85px currentColor;">Mean</span>
<svg style="left:0;top:0" width="1" height="1"><path d="M1365.20 921.20 L1369.80 925.60 L1374.40 921.20" fill="none" stroke="#6e9fff" stroke-width="2.2" stroke-linecap="round" stroke-linejoin="round"/></svg>
<div class="hr" style="left:650px;top:945.0px;width:740px"></div>
<div class="hr" style="left:650px;top:992.6px;width:740px"></div>
<div class="hr" style="left:650px;top:1040.2px;width:740px"></div>
<div class="hr" style="left:650px;top:1087.8px;width:740px"></div>
<span class="sw" style="left:666px;top:965.8px;background:#eecd46"></span>
<span class="t" style="left:710.6px;top:954.4px;font-size:25px;line-height:31px;color:#ccccdc;letter-spacing:0.73px;-webkit-text-stroke:0.3px currentColor;">car</span>
<span class="tw"><span class="t" style="left:1306.6px;top:954.4px;font-size:25px;line-height:31px;color:#ccccdc;transform:scaleX(0.9501);transform-origin:0 0;-webkit-text-stroke:0.3px currentColor;">27.9</span> <span class="t" style="left:1361.8px;top:954.4px;font-size:25px;line-height:31px;color:#ccccdc;-webkit-text-stroke:0.3px currentColor;">s</span></span>
<span class="sw" style="left:666px;top:1013.4px;background:#8eb7fa"></span>
<span class="t" style="left:710.6px;top:1002.0px;font-size:25px;line-height:31px;color:#ccccdc;letter-spacing:0.7px;-webkit-text-stroke:0.3px currentColor;">scooter</span>
<span class="tw"><span class="t" style="left:1306.6px;top:1002.0px;font-size:25px;line-height:31px;color:#ccccdc;transform:scaleX(0.9501);transform-origin:0 0;-webkit-text-stroke:0.3px currentColor;">7.88</span> <span class="t" style="left:1361.8px;top:1002.0px;font-size:25px;line-height:31px;color:#ccccdc;-webkit-text-stroke:0.3px currentColor;">s</span></span>
<span class="sw" style="left:666px;top:1061.0px;background:#7ebd6e"></span>
<span class="t" style="left:710.6px;top:1049.6px;font-size:25px;line-height:31px;color:#ccccdc;letter-spacing:0.38px;-webkit-text-stroke:0.3px currentColor;">bike</span>
<span class="tw"><span class="t" style="left:1303.2px;top:1049.6px;font-size:25px;line-height:31px;color:#ccccdc;letter-spacing:0.32px;-webkit-text-stroke:0.3px currentColor;">4.35</span> <span class="t" style="left:1361.8px;top:1049.6px;font-size:25px;line-height:31px;color:#ccccdc;-webkit-text-stroke:0.3px currentColor;">s</span></span>
<svg style="left:0;top:0" width="1" height="1"><path d="M1386.8 1103.5 L1404.6 1086 M1395.8 1103.5 L1404.6 1095.4" fill="none" stroke="#5b5c65" stroke-width="2"/></svg>
</div>
</section>
<section class="panel" style="left:1424px;top:364px;width:776px;height:744px">
<div class="abs" style="left:-1426px;top:-366px;width:3018px;height:1536px">
<h3 class="tw"><span class="t" style="left:1442.6px;top:380.1px;font-size:29px;line-height:36px;color:#ccccdc;transform:scaleX(0.9479);transform-origin:0 0;-webkit-text-stroke:1.20px currentColor;">CPU</span> <span class="t" style="left:1510.6px;top:380.1px;font-size:29px;line-height:36px;color:#ccccdc;letter-spacing:0.44px;-webkit-text-stroke:1.20px currentColor;">usage</span> <span class="t" style="left:1601.7px;top:380.1px;font-size:29px;line-height:36px;color:#ccccdc;transform:scaleX(0.9740);transform-origin:0 0;-webkit-text-stroke:1.20px currentColor;">by</span> <span class="t" style="left:1642.1px;top:380.1px;font-size:29px;line-height:36px;color:#ccccdc;letter-spacing:0.94px;-webkit-text-stroke:1.20px currentColor;">region</span> <span class="t" style="left:1738.1px;top:380.1px;font-size:29px;line-height:36px;color:#ccccdc;letter-spacing:1.46px;-webkit-text-stroke:1.20px currentColor;">[60s</span> <span class="t" style="left:1808.2px;top:380.1px;font-size:29px;line-height:36px;color:#ccccdc;letter-spacing:1.29px;-webkit-text-stroke:1.20px currentColor;">window]</span></h3>
<svg style="left:0;top:0" width="3018" height="1536" viewBox="0 0 3018 1536"><rect x="1519" y="462" width="1" height="402" fill="rgba(220,235,255,0.085)"/><rect x="1629" y="462" width="1" height="402" fill="rgba(220,235,255,0.085)"/><rect x="1738" y="462" width="1" height="402" fill="rgba(220,235,255,0.085)"/><rect x="1847" y="462" width="1" height="402" fill="rgba(220,235,255,0.085)"/><rect x="1957" y="462" width="1" height="402" fill="rgba(220,235,255,0.085)"/><rect x="2066" y="462" width="1" height="402" fill="rgba(220,235,255,0.085)"/><rect x="1511" y="550" width="655" height="1" fill="rgba(220,235,255,0.085)"/><rect x="1511" y="659" width="655" height="1" fill="rgba(220,235,255,0.085)"/><rect x="1511" y="768" width="655" height="1" fill="rgba(220,235,255,0.085)"/><polyline points="1847.8,666.3 1869.7,742.0 1891.6,716.2 1913.5,745.5 1935.3,766.9 1957.2,505.4 1979.1,712.9 2001.0,697.7 2022.9,740.9 2044.8,712.0 2066.7,746.9 2088.5,766.9 2110.4,612.0 2132.3,665.0 2154.2,789.8" fill="none" stroke="#7ebd6e" stroke-width="2.1" stroke-linejoin="round" stroke-linecap="butt"/><polyline points="1847.8,676.0 1869.7,679.8 1891.6,712.7 1913.5,618.6 1935.3,566.2 1957.2,720.8 1979.1,722.0 2001.0,749.0 2022.9,703.2 2044.8,720.8 2066.7,707.8 2088.5,620.0 2110.4,691.0 2132.3,718.3 2154.2,771.4" fill="none" stroke="#eecd46" stroke-width="2.1" stroke-linejoin="round" stroke-linecap="butt"/><polyline points="1847.8,727.6 1869.7,633.9 1891.6,681.9 1913.5,753.2 1935.3,804.9 1957.2,789.8 1979.1,612.0 2001.0,626.7 2022.9,666.6 2044.8,697.7 2066.7,604.9 2088.5,637.8 2110.4,786.0 2132.3,718.0 2154.2,527.0" fill="none" stroke="#8eb7fa" stroke-width="2.1" stroke-linejoin="round" stroke-linecap="butt"/></svg>
<span class="tw"><span class="t" style="left:1449.8px;top:533.1px;font-size:25px;line-height:31px;color:#ccccdc;letter-spacing:1.55px;-webkit-text-stroke:0.3px currentColor;">20</span> <span class="t" style="left:1487.5px;top:533.1px;font-size:25px;line-height:31px;color:#ccccdc;-webkit-text-stroke:0.3px currentColor;">s</span></span>
<span class="tw"><span class="t" style="left:1454.6px;top:642.1px;font-size:25px;line-height:31px;color:#ccccdc;transform:scaleX(0.8829);transform-origin:0 0;-webkit-text-stroke:0.3px currentColor;">15</span> <span class="t" style="left:1487.5px;top:642.1px;font-size:25px;line-height:31px;color:#ccccdc;-webkit-text-stroke:0.3px currentColor;">s</span></span>
<span class="tw"><span class="t" style="left:1454.6px;top:750.8px;font-size:25px;line-height:31px;color:#ccccdc;transform:scaleX(0.8829);transform-origin:0 0;-webkit-text-stroke:0.3px currentColor;">10</span> <span class="t" style="left:1487.5px;top:750.8px;font-size:25px;line-height:31px;color:#ccccdc;-webkit-text-stroke:0.3px currentColor;">s</span></span>
<span class="t" style="left:1490.8px;top:869.3px;font-size:25px;line-height:31px;color:#ccccdc;transform:scaleX(0.9054);transform-origin:0 0;-webkit-text-stroke:0.3px currentColor;">10:10</span>
<span class="t" style="left:1600.7px;top:869.3px;font-size:25px;line-height:31px;color:#ccccdc;transform:scaleX(0.8894);transform-origin:0 0;-webkit-text-stroke:0.3px currentColor;">10:15</span>
<span class="t" style="left:1707.7px;top:869.3px;font-size:25px;line-height:31px;color:#ccccdc;transform:scaleX(0.9645);transform-origin:0 0;-webkit-text-stroke:0.3px currentColor;">10:20</span>
<span class="t" style="left:1817.1px;top:869.3px;font-size:25px;line-height:31px;color:#ccccdc;transform:scaleX(0.9645);transform-origin:0 0;-webkit-text-stroke:0.3px currentColor;">10:25</span>
<span class="t" style="left:1926.0px;top:869.3px;font-size:25px;line-height:31px;color:#ccccdc;letter-spacing:-0.31px;-webkit-text-stroke:0.3px currentColor;">10:30</span>
<span class="t" style="left:2035.9px;top:869.3px;font-size:25px;line-height:31px;color:#ccccdc;transform:scaleX(0.9645);transform-origin:0 0;-webkit-text-stroke:0.3px currentColor;">10:35</span>
<span class="t" style="left:1502.6px;top:906.4px;font-size:25px;line-height:31px;color:#6e9fff;letter-spacing:-0.12px;-webkit-text-stroke:0.85px currentColor;">Name</span>
<span class="t" style="left:2084.8px;top:906.4px;font-size:25px;line-height:31px;color:#6e9fff;letter-spacing:0.43px;-webkit-text-stroke:0.85px currentColor;">Mean</span>
<svg style="left:0;top:0" width="1" height="1"><path d="M2157.20 921.20 L2161.80 925.60 L2166.40 921.20" fill="none" stroke="#6e9fff" stroke-width="2.2" stroke-linecap="round" stroke-linejoin="round"/></svg>
<div class="hr" style="left:1442px;top:945.0px;width:740px"></div>
<div class="hr" style="left:1442px;top:992.6px;width:740px"></div>
<div class="hr" style="left:1442px;top:1040.2px;width:740px"></div>
<div class="hr" style="left:1442px;top:1087.8px;width:740px"></div>
<span class="sw" style="left:1458px;top:965.8px;background:#8eb7fa"></span>
<span class="t" style="left:1502.6px;top:954.4px;font-size:25px;line-height:31px;color:#ccccdc;letter-spacing:0.83px;-webkit-text-stroke:0.3px currentColor;">us-east</span>
<span class="tw"><span class="t" style="left:2099.8px;top:954.4px;font-size:25px;line-height:31px;color:#ccccdc;transform:scaleX(0.9254);transform-origin:0 0;-webkit-text-stroke:0.3px currentColor;">13.8</span> <span class="t" style="left:2153.8px;top:954.4px;font-size:25px;line-height:31px;color:#ccccdc;-webkit-text-stroke:0.3px currentColor;">s</span></span>
<span class="sw" style="left:1458px;top:1013.4px;background:#eecd46"></span>
<span class="t" style="left:1502.6px;top:1002.0px;font-size:25px;line-height:31px;color:#ccccdc;letter-spacing:0.84px;-webkit-text-stroke:0.3px currentColor;">eu-north</span>
<span class="tw"><span class="t" style="left:2099.8px;top:1002.0px;font-size:25px;line-height:31px;color:#ccccdc;transform:scaleX(0.9254);transform-origin:0 0;-webkit-text-stroke:0.3px currentColor;">13.5</span> <span class="t" style="left:2153.8px;top:1002.0px;font-size:25px;line-height:31px;color:#ccccdc;-webkit-text-stroke:0.3px currentColor;">s</span></span>
<span class="sw" style="left:1458px;top:1061.0px;background:#7ebd6e"></span>
<span class="t" style="left:1502.6px;top:1049.6px;font-size:25px;line-height:31px;color:#ccccdc;letter-spacing:0.82px;-webkit-text-stroke:0.3px currentColor;">ap-south</span>
<span class="tw"><span class="t" style="left:2098.5px;top:1049.6px;font-size:25px;line-height:31px;color:#ccccdc;transform:scaleX(0.9522);transform-origin:0 0;-webkit-text-stroke:0.3px currentColor;">12.9</span> <span class="t" style="left:2153.8px;top:1049.6px;font-size:25px;line-height:31px;color:#ccccdc;-webkit-text-stroke:0.3px currentColor;">s</span></span>
<svg style="left:0;top:0" width="1" height="1"><path d="M2178.8 1103.5 L2196.6 1086 M2187.8 1103.5 L2196.6 1095.4" fill="none" stroke="#5b5c65" stroke-width="2"/></svg>
</div>
</section>
<section class="panel" style="left:2216px;top:364px;width:776px;height:744px">
<div class="abs" style="left:-2218px;top:-366px;width:3018px;height:1536px">
<h3 class="tw"><span class="t" style="left:2234.6px;top:380.1px;font-size:29px;line-height:36px;color:#ccccdc;transform:scaleX(0.9479);transform-origin:0 0;-webkit-text-stroke:1.20px currentColor;">CPU</span> <span class="t" style="left:2302.6px;top:380.1px;font-size:29px;line-height:36px;color:#ccccdc;letter-spacing:0.49px;-webkit-text-stroke:1.20px currentColor;">usage</span> <span class="t" style="left:2394.0px;top:380.1px;font-size:29px;line-height:36px;color:#ccccdc;letter-spacing:-0.4px;-webkit-text-stroke:1.20px currentColor;">by</span> <span class="t" style="left:2434.5px;top:380.1px;font-size:29px;line-height:36px;color:#ccccdc;letter-spacing:0.92px;-webkit-text-stroke:1.20px currentColor;">region</span> <span class="t" style="left:2529.0px;top:380.1px;font-size:29px;line-height:36px;color:#ccccdc;letter-spacing:0.18px;-webkit-text-stroke:1.20px currentColor;">and</span> <span class="t" style="left:2588.4px;top:380.1px;font-size:29px;line-height:36px;color:#ccccdc;letter-spacing:0.78px;-webkit-text-stroke:1.20px currentColor;">vehicle</span> <span class="t" style="left:2694.0px;top:380.1px;font-size:29px;line-height:36px;color:#ccccdc;letter-spacing:1.53px;-webkit-text-stroke:1.20px currentColor;">[60s</span> <span class="t" style="left:2764.0px;top:380.1px;font-size:29px;line-height:36px;color:#ccccdc;letter-spacing:1.29px;-webkit-text-stroke:1.20px currentColor;">window]</span></h3>
<svg style="left:0;top:0" width="3018" height="1536" viewBox="0 0 3018 1536"><rect x="2311" y="462" width="1" height="368" fill="rgba(220,235,255,0.085)"/><rect x="2421" y="462" width="1" height="368" fill="rgba(220,235,255,0.085)"/><rect x="2530" y="462" width="1" height="368" fill="rgba(220,235,255,0.085)"/><rect x="2639" y="462" width="1" height="368" fill="rgba(220,235,255,0.085)"/><rect x="2749" y="462" width="1" height="368" fill="rgba(220,235,255,0.085)"/><rect x="2858" y="462" width="1" height="368" fill="rgba(220,235,255,0.085)"/><rect x="2303" y="462" width="655" height="1" fill="rgba(220,235,255,0.085)"/><rect x="2303" y="552" width="655" height="1" fill="rgba(220,235,255,0.085)"/><rect x="2303" y="642" width="655" height="1" fill="rgba(220,235,255,0.085)"/><rect x="2303" y="732" width="655" height="1" fill="rgba(220,235,255,0.085)"/><rect x="2303" y="822" width="655" height="1" fill="rgba(220,235,255,0.085)"/><polyline points="2639.8,804.1 2661.7,800.9 2683.6,785.6 2705.5,803.8 2727.3,803.8 2749.2,806.2 2771.1,796.8 2793.0,799.9 2814.9,778.6 2836.8,808.0 2858.7,797.1 2880.5,790.1 2902.4,785.9 2924.3,803.8 2946.2,803.8" fill="none" stroke="#98d68c" stroke-width="2.1" stroke-linejoin="round" stroke-linecap="butt"/><polyline points="2639.8,771.6 2661.7,750.0 2683.6,800.9 2705.5,764.0 2727.3,756.6 2749.2,792.9 2771.1,766.0 2793.0,792.2 2814.9,764.9 2836.8,794.3 2858.7,809.2 2880.5,771.6 2902.4,763.5 2924.3,777.9 2946.2,764.9" fill="none" stroke="#6196ee" stroke-width="2.1" stroke-linejoin="round" stroke-linecap="butt"/><polyline points="2639.8,792.2 2661.7,771.6 2683.6,764.9 2705.5,794.3 2727.3,786.3 2749.2,763.5 2771.1,792.2 2793.0,756.6 2814.9,756.6 2836.8,794.3 2858.7,792.9 2880.5,807.3 2902.4,767.0 2924.3,806.2 2946.2,785.9" fill="none" stroke="#8eb7fa" stroke-width="2.1" stroke-linejoin="round" stroke-linecap="butt"/><polyline points="2639.8,788.7 2661.7,793.2 2683.6,790.8 2705.5,797.1 2727.3,803.8 2749.2,808.0 2771.1,792.9 2793.0,782.8 2814.9,818.0 2836.8,792.9 2858.7,789.8 2880.5,793.2 2902.4,803.4 2924.3,808.3 2946.2,789.4" fill="none" stroke="#f08138" stroke-width="2.1" stroke-linejoin="round" stroke-linecap="butt"/><polyline points="2639.8,785.7 2661.7,778.2 2683.6,789.0 2705.5,790.4 2727.3,788.4 2749.2,797.1 2771.1,806.9 2793.0,792.9 2814.9,803.8 2836.8,793.2 2858.7,797.1 2880.5,800.3 2902.4,782.8 2924.3,790.4 2946.2,797.4" fill="none" stroke="#b57bd6" stroke-width="2.1" stroke-linejoin="round" stroke-linecap="butt"/><polyline points="2639.8,786.0 2661.7,779.3 2683.6,767.8 2705.5,757.0 2727.3,792.9 2749.2,785.9 2771.1,763.9 2793.0,771.9 2814.9,727.6 2836.8,763.9 2858.7,750.0 2880.5,728.7 2902.4,778.9 2924.3,763.9 2946.2,770.9" fill="none" stroke="#4e873c" stroke-width="2.1" stroke-linejoin="round" stroke-linecap="butt"/><polyline points="2639.8,680.4 2661.7,618.5 2683.6,658.6 2705.5,726.9 2727.3,733.9 2749.2,720.2 2771.1,584.8 2793.0,604.8 2814.9,671.0 2836.8,671.0 2858.7,604.8 2880.5,650.0 2902.4,739.1 2924.3,691.3 2946.2,519.1" fill="none" stroke="#7062a0" stroke-width="2.1" stroke-linejoin="round" stroke-linecap="butt"/><polyline points="2639.8,606.5 2661.7,692.0 2683.6,692.0 2705.5,669.6 2727.3,694.8 2749.2,497.5 2771.1,650.7 2793.0,671.4 2814.9,726.9 2836.8,638.9 2858.7,679.4 2880.5,687.1 2902.4,604.8 2924.3,589.7 2946.2,713.6" fill="none" stroke="#eecd46" stroke-width="2.1" stroke-linejoin="round" stroke-linecap="butt"/><polyline points="2639.8,649.3 2661.7,671.0 2683.6,648.6 2705.5,603.7 2727.3,559.0 2749.2,645.4 2771.1,689.5 2793.0,695.0 2814.9,648.9 2836.8,660.7 2858.7,638.6 2880.5,598.8 2902.4,653.6 2924.3,659.4 2946.2,735.7" fill="none" stroke="#e1555f" stroke-width="2.1" stroke-linejoin="round" stroke-linecap="butt"/></svg>
<span class="tw"><span class="t" style="left:2241.8px;top:445.0px;font-size:25px;line-height:31px;color:#ccccdc;letter-spacing:1.55px;-webkit-text-stroke:0.3px currentColor;">20</span> <span class="t" style="left:2279.5px;top:445.0px;font-size:25px;line-height:31px;color:#ccccdc;-webkit-text-stroke:0.3px currentColor;">s</span></span>
<span class="tw"><span class="t" style="left:2246.6px;top:535.0px;font-size:25px;line-height:31px;color:#ccccdc;transform:scaleX(0.8829);transform-origin:0 0;-webkit-text-stroke:0.3px currentColor;">15</span> <span class="t" style="left:2279.5px;top:535.0px;font-size:25px;line-height:31px;color:#ccccdc;-webkit-text-stroke:0.3px currentColor;">s</span></span>
<span class="tw"><span class="t" style="left:2246.6px;top:625.1px;font-size:25px;line-height:31px;color:#ccccdc;transform:scaleX(0.8829);transform-origin:0 0;-webkit-text-stroke:0.3px currentColor;">10</span> <span class="t" style="left:2279.5px;top:625.1px;font-size:25px;line-height:31px;color:#ccccdc;-webkit-text-stroke:0.3px currentColor;">s</span></span>
<span class="tw"><span class="t" style="left:2256.8px;top:714.9px;font-size:25px;line-height:31px;color:#ccccdc;-webkit-text-stroke:0.3px currentColor;">5</span> <span class="t" style="left:2279.5px;top:714.9px;font-size:25px;line-height:31px;color:#ccccdc;-webkit-text-stroke:0.3px currentColor;">s</span></span>
<span class="tw"><span class="t" style="left:2243.2px;top:805.0px;font-size:25px;line-height:31px;color:#ccccdc;-webkit-text-stroke:0.3px currentColor;">0</span> <span class="t" style="left:2266.1px;top:805.0px;font-size:25px;line-height:31px;color:#ccccdc;transform:scaleX(0.9517);transform-origin:0 0;-webkit-text-stroke:0.3px currentColor;">ns</span></span>
<span class="t" style="left:2282.8px;top:835.4px;font-size:25px;line-height:31px;color:#ccccdc;transform:scaleX(0.9054);transform-origin:0 0;-webkit-text-stroke:0.3px currentColor;">10:10</span>
<span class="t" style="left:2392.7px;top:835.4px;font-size:25px;line-height:31px;color:#ccccdc;transform:scaleX(0.8894);transform-origin:0 0;-webkit-text-stroke:0.3px currentColor;">10:15</span>
<span class="t" style="left:2499.7px;top:835.4px;font-size:25px;line-height:31px;color:#ccccdc;transform:scaleX(0.9645);transform-origin:0 0;-webkit-text-stroke:0.3px currentColor;">10:20</span>
<span class="t" style="left:2609.1px;top:835.4px;font-size:25px;line-height:31px;color:#ccccdc;transform:scaleX(0.9645);transform-origin:0 0;-webkit-text-stroke:0.3px currentColor;">10:25</span>
<span class="t" style="left:2718.0px;top:835.4px;font-size:25px;line-height:31px;color:#ccccdc;letter-spacing:-0.31px;-webkit-text-stroke:0.3px currentColor;">10:30</span>
<span class="t" style="left:2827.9px;top:835.4px;font-size:25px;line-height:31px;color:#ccccdc;transform:scaleX(0.9645);transform-origin:0 0;-webkit-text-stroke:0.3px currentColor;">10:35</span>
<span class="t" style="left:2294.6px;top:872.2px;font-size:25px;line-height:31px;color:#6e9fff;letter-spacing:-0.12px;-webkit-text-stroke:0.85px currentColor;">Name</span>
<span class="t" style="left:2876.8px;top:872.2px;font-size:25px;line-height:31px;color:#6e9fff;letter-spacing:0.43px;-webkit-text-stroke:0.85px currentColor;">Mean</span>
<svg style="left:0;top:0" width="1" height="1"><path d="M2949.20 887.00 L2953.80 891.40 L2958.40 887.00" fill="none" stroke="#6e9fff" stroke-width="2.2" stroke-linecap="round" stroke-linejoin="round"/></svg>
<div class="hr" style="left:2234px;top:910.1px;width:740px"></div>
<div class="hr" style="left:2234px;top:957.7px;width:740px"></div>
<div class="hr" style="left:2234px;top:1005.3px;width:740px"></div>
<div class="hr" style="left:2234px;top:1052.9px;width:740px"></div>
<span class="sw" style="left:2250px;top:930.9px;background:#e1555f"></span>
<span class="tw"><span class="t" style="left:2294.6px;top:919.5px;font-size:25px;line-height:31px;color:#ccccdc;letter-spacing:0.58px;-webkit-text-stroke:0.3px currentColor;">car</span> <span class="t" style="left:2339.5px;top:919.5px;font-size:25px;line-height:31px;color:#ccccdc;-webkit-text-stroke:0.3px currentColor;">-</span> <span class="t" style="left:2357.2px;top:919.5px;font-size:25px;line-height:31px;color:#ccccdc;letter-spacing:0.81px;-webkit-text-stroke:0.3px currentColor;">eu-north</span></span>
<span class="tw"><span class="t" style="left:2886.5px;top:919.5px;font-size:25px;line-height:31px;color:#ccccdc;letter-spacing:0.56px;-webkit-text-stroke:0.3px currentColor;">9.52</span> <span class="t" style="left:2945.8px;top:919.5px;font-size:25px;line-height:31px;color:#ccccdc;-webkit-text-stroke:0.3px currentColor;">s</span></span>
<span class="sw" style="left:2250px;top:978.5px;background:#eecd46"></span>
<span class="tw"><span class="t" style="left:2294.6px;top:967.1px;font-size:25px;line-height:31px;color:#ccccdc;letter-spacing:0.58px;-webkit-text-stroke:0.3px currentColor;">car</span> <span class="t" style="left:2339.5px;top:967.1px;font-size:25px;line-height:31px;color:#ccccdc;-webkit-text-stroke:0.3px currentColor;">-</span> <span class="t" style="left:2357.2px;top:967.1px;font-size:25px;line-height:31px;color:#ccccdc;letter-spacing:0.85px;-webkit-text-stroke:0.3px currentColor;">ap-south</span></span>
<span class="tw"><span class="t" style="left:2886.5px;top:967.1px;font-size:25px;line-height:31px;color:#ccccdc;letter-spacing:0.56px;-webkit-text-stroke:0.3px currentColor;">9.32</span> <span class="t" style="left:2945.8px;top:967.1px;font-size:25px;line-height:31px;color:#ccccdc;-webkit-text-stroke:0.3px currentColor;">s</span></span>
<span class="sw" style="left:2250px;top:1026.1px;background:#7062a0"></span>
<span class="tw"><span class="t" style="left:2294.6px;top:1014.7px;font-size:25px;line-height:31px;color:#ccccdc;letter-spacing:0.58px;-webkit-text-stroke:0.3px currentColor;">car</span> <span class="t" style="left:2339.5px;top:1014.7px;font-size:25px;line-height:31px;color:#ccccdc;-webkit-text-stroke:0.3px currentColor;">-</span> <span class="t" style="left:2357.2px;top:1014.7px;font-size:25px;line-height:31px;color:#ccccdc;letter-spacing:0.88px;-webkit-text-stroke:0.3px currentColor;">us-east</span></span>
<span class="tw"><span class="t" style="left:2886.5px;top:1014.7px;font-size:25px;line-height:31px;color:#ccccdc;letter-spacing:0.56px;-webkit-text-stroke:0.3px currentColor;">9.09</span> <span class="t" style="left:2945.8px;top:1014.7px;font-size:25px;line-height:31px;color:#ccccdc;-webkit-text-stroke:0.3px currentColor;">s</span></span>
<span class="sw" style="left:2250px;top:1073.7px;background:#4e873c"></span>
<span class="tw"><span class="t" style="left:2294.6px;top:1062.3px;font-size:25px;line-height:31px;color:#ccccdc;letter-spacing:0.63px;-webkit-text-stroke:0.3px currentColor;">scooter</span> <span class="t" style="left:2390.5px;top:1062.3px;font-size:25px;line-height:31px;color:#ccccdc;-webkit-text-stroke:0.3px currentColor;">-</span> <span class="t" style="left:2408.0px;top:1062.3px;font-size:25px;line-height:31px;color:#ccccdc;letter-spacing:0.78px;-webkit-text-stroke:0.3px currentColor;">us-east</span></span>
<span class="tw"><span class="t" style="left:2893.5px;top:1062.3px;font-size:25px;line-height:31px;color:#ccccdc;transform:scaleX(0.8905);transform-origin:0 0;-webkit-text-stroke:0.3px currentColor;">3.12</span> <span class="t" style="left:2945.8px;top:1062.3px;font-size:25px;line-height:31px;color:#ccccdc;-webkit-text-stroke:0.3px currentColor;">s</span></span>
<svg style="left:0;top:0" width="1" height="1"><path d="M2970.8 1103.5 L2988.6 1086 M2979.8 1103.5 L2988.6 1095.4" fill="none" stroke="#5b5c65" stroke-width="2"/></svg>
</div>
</section>
</div>
</main>
</div>
</body>
</html>
